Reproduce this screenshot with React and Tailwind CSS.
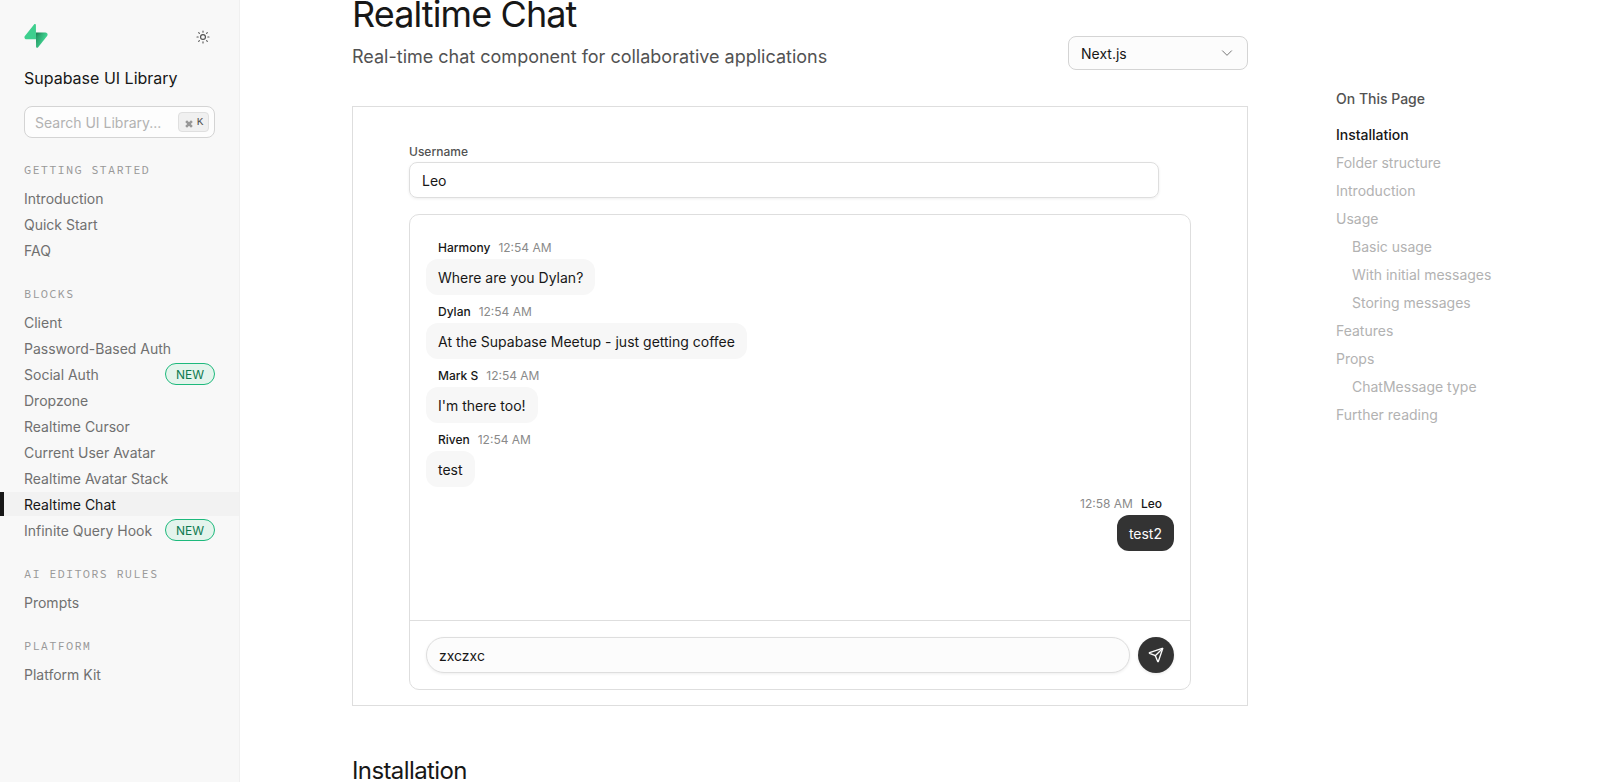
import React from 'react';

const sections = [
  { title: 'GETTING STARTED', items: [['Introduction'], ['Quick Start'], ['FAQ']] },
  {
    title: 'BLOCKS',
    items: [
      ['Client'],
      ['Password-Based Auth'],
      ['Social Auth', 'new'],
      ['Dropzone'],
      ['Realtime Cursor'],
      ['Current User Avatar'],
      ['Realtime Avatar Stack'],
      ['Realtime Chat', 'active'],
      ['Infinite Query Hook', 'new'],
    ],
  },
  { title: 'AI EDITORS RULES', items: [['Prompts']] },
  { title: 'PLATFORM', items: [['Platform Kit']] },
];

const messages = [
  ['Harmony', '12:54 AM', 'Where are you Dylan?'],
  ['Dylan', '12:54 AM', 'At the Supabase Meetup - just getting coffee'],
  ['Mark S', '12:54 AM', "I'm there too!"],
  ['Riven', '12:54 AM', 'test'],
  ['Leo', '12:58 AM', 'test2', true],
];

const toc = [
  ['Folder structure'],
  ['Introduction'],
  ['Usage'],
  ['Basic usage', true],
  ['With initial messages', true],
  ['Storing messages', true],
  ['Features'],
  ['Props'],
  ['ChatMessage type', true],
  ['Further reading'],
];

function Logo() {
  return (
    <svg width="24" height="24" viewBox="0 0 109 113" fill="none" aria-hidden="true">
      <path d="M63.7076 110.284C60.8481 113.885 55.0502 111.912 54.9813 107.314L53.9738 40.0627L99.1935 40.0627C107.384 40.0627 111.952 49.5228 106.859 55.9374L63.7076 110.284Z" fill="url(#logoA)" />
      <path d="M63.7076 110.284C60.8481 113.885 55.0502 111.912 54.9813 107.314L53.9738 40.0627L99.1935 40.0627C107.384 40.0627 111.952 49.5228 106.859 55.9374L63.7076 110.284Z" fill="url(#logoB)" fillOpacity="0.2" />
      <path d="M45.317 2.07103C48.1765 -1.53037 53.9745 0.442937 54.0434 5.041L54.4849 72.2922H9.83113C1.64038 72.2922 -2.92775 62.8321 2.1655 56.4175L45.317 2.07103Z" fill="#3ECF8E" />
      <defs>
        <linearGradient id="logoA" x1="53.9738" y1="54.974" x2="94.1635" y2="71.8295" gradientUnits="userSpaceOnUse">
          <stop stopColor="#249361" />
          <stop offset="1" stopColor="#3ECF8E" />
        </linearGradient>
        <linearGradient id="logoB" x1="36.1558" y1="30.578" x2="54.4844" y2="65.0806" gradientUnits="userSpaceOnUse">
          <stop />
          <stop offset="1" stopOpacity="0" />
        </linearGradient>
      </defs>
    </svg>
  );
}

function SunIcon() {
  return (
    <svg width="14" height="14" viewBox="0.5 0.5 14 14" fill="none" aria-hidden="true">
      <circle cx="7.5" cy="7.5" r="2.45" stroke="#525252" strokeWidth="1.2" />
      <path d="M7.5 1.5v1.2M7.5 12.3v1.2M1.5 7.5h1.2M12.3 7.5h1.2M3.2 3.2l.7.7M11.1 11.1l.7.7M3.2 11.8l.7-.7M11.1 3.9l.7-.7" stroke="#525252" strokeWidth="1.1" strokeLinecap="round" />
    </svg>
  );
}

function Sidebar() {
  return (
    <aside className="flex h-full w-60 shrink-0 flex-col border-r border-[#f0f0f0] bg-[#f8f8f8] pt-6">
      <div className="flex h-6 items-center justify-between px-6">
        <Logo />
        <span className="mt-0.5 mr-[5px] flex">
          <SunIcon />
        </span>
      </div>
      <div className="mt-[18px] px-6 text-base leading-6 text-[#171717]">Supabase UI Library</div>
      <div className="mx-6 mt-4 flex h-8 items-center justify-between rounded-lg border border-[#d4d4d4] bg-[#fdfdfd] pr-[5px] pl-2.5">
        <span className="pt-0.5 text-sm text-[#b2b2b2]">Search UI Library...</span>
        <kbd className="flex h-5 w-[31px] items-center justify-center gap-1 rounded-sm border border-[#dfdfdf] bg-[#f0f0f0] pl-px font-['Liberation_Mono',monospace] text-[11px] leading-none text-[#525252]">
          <svg width="8" height="8" viewBox="0 0 24 24" fill="none" stroke="currentColor" strokeWidth="2" className="mt-[3px]">
            <path d="M15 6v12a3 3 0 1 0 3-3H6a3 3 0 1 0 3 3V6a3 3 0 1 0-3 3h12a3 3 0 1 0-3-3" />
          </svg>
          <span>K</span>
        </kbd>
      </div>
      <nav className="mt-6 flex flex-col gap-6">
        {sections.map((s) => (
          <div key={s.title}>
            <div className="mb-2 px-6 font-['Source_Code_Pro','Liberation_Mono',monospace] text-xs leading-4 tracking-[1.2px] text-[#999]">{s.title}</div>
            <div className="flex flex-col gap-0.5">
              {s.items.map(([label, flag]) => (
                <div
                  key={label}
                  className={
                    flag === 'active'
                      ? 'flex h-6 items-center border-l-4 border-[#171717] bg-[#f2f2f2] pl-5 text-sm text-[#171717]'
                      : 'flex h-6 items-center justify-between px-6 text-sm text-[#707070]'
                  }
                >
                  <span className="pt-0.5">{label}</span>
                  {flag === 'new' && (
                    <span className="flex h-[22px] w-[50px] items-center justify-center rounded-full border border-[#1db97c] bg-[#e4f4ec] pt-0.5 text-xs text-[#0f7a50]">NEW</span>
                  )}
                </div>
              ))}
            </div>
          </div>
        ))}
      </nav>
    </aside>
  );
}

function Message({ name, time, text, own }) {
  return (
    <div className={own ? 'flex flex-col items-end gap-[3px]' : 'flex flex-col items-start gap-[3px]'}>
      <div className={own ? 'flex flex-row-reverse items-center gap-2 px-3 text-xs leading-4' : 'flex items-center gap-2 px-3 text-xs leading-4'}>
        <span className="font-medium text-[#171717]">{name}</span>
        <span className="text-[#8a8a8a]">{time}</span>
      </div>
      <div className={own ? 'rounded-xl bg-[#333] px-3 pt-[9px] pb-[7px] text-sm text-[#fcfcfc]' : 'rounded-xl bg-[#f7f7f7] px-3 pt-[9px] pb-[7px] text-sm text-[#171717]'}>{text}</div>
    </div>
  );
}

function ChatPreview() {
  return (
    <div className="mt-9 h-[600px] border border-[#dedede] px-14 pt-[37px]">
      <div className="text-xs leading-4 font-medium text-[#525252]">Username</div>
      <div className="mt-0.5 mr-8 flex h-9 items-center rounded-lg border border-[#dedede] px-3 pt-0.5 text-sm text-[#171717] shadow-[0_1px_3px_rgba(0,0,0,0.07)]">Leo</div>
      <div className="mt-4 flex h-[476px] flex-col rounded-[10px] border border-[#dedede]">
        <div className="flex flex-1 flex-col gap-[9px] px-4 pt-[25px]">
          {messages.map(([name, time, text, own]) => (
            <Message key={name} name={name} time={time} text={text} own={own} />
          ))}
        </div>
        <div className="flex gap-2 border-t border-[#dedede] p-4">
          <div className="flex h-9 flex-1 items-center rounded-full border border-[#dedede] bg-[#fcfcfc] px-3 pt-0.5 text-sm text-[#171717] shadow-[0_1px_3px_rgba(0,0,0,0.07)]">zxczxc</div>
          <div className="flex size-9 items-center justify-center rounded-full bg-[#333] text-[#fcfcfc] shadow-[0_1px_3px_rgba(0,0,0,0.1)]">
            <svg width="16" height="16" viewBox="0 0 24 24" fill="none" stroke="currentColor" strokeWidth="2" strokeLinecap="round" strokeLinejoin="round">
              <path d="M14.536 21.686a.5.5 0 0 0 .937-.024l6.5-19a.496.496 0 0 0-.635-.635l-19 6.5a.5.5 0 0 0-.024.937l7.93 3.18a2 2 0 0 1 1.112 1.11z" />
              <path d="m21.854 2.147-10.94 10.939" />
            </svg>
          </div>
        </div>
      </div>
    </div>
  );
}

export default function App() {
  return (
    <div className="flex h-[782px] w-[1600px] overflow-hidden bg-white font-['Inter',sans-serif]">
      <Sidebar />
      <main className="ml-28 w-[896px] shrink-0">
        <div className="-mt-1.5 flex items-end justify-between">
          <div>
            <h1 className="text-4xl leading-10 tracking-tight text-[#171717]">Realtime Chat</h1>
            <p className="mt-[9px] -mb-px text-lg leading-7 text-[#525252]">Real-time chat component for collaborative applications</p>
          </div>
          <div className="flex h-[34px] w-[180px] items-center justify-between rounded-lg border border-[#d4d4d4] bg-[#fcfcfc] px-3 text-sm text-[#171717]">
            <span className="pt-0.5">Next.js</span>
            <svg width="16" height="16" viewBox="0 0 24 24" fill="none" stroke="#525252" strokeWidth="1.2" strokeLinecap="round" strokeLinejoin="round">
              <path d="m5.2 8.7 6.8 6.8 6.8-6.8" />
            </svg>
          </div>
        </div>
        <ChatPreview />
        <h2 className="mt-[49px] text-2xl leading-8 tracking-tight text-[#171717]">Installation</h2>
      </main>
      <aside className="ml-[88px] pt-[89px] text-sm">
        <div className="leading-5 font-medium text-[#525252]">On This Page</div>
        <div className="mt-4 flex flex-col gap-2 leading-5 text-[#b2b2b2]">
          <div className="font-medium text-[#171717]">Installation</div>
          {toc.map(([label, nested]) => (
            <div key={label} className={nested ? 'pl-4' : ''}>{label}</div>
          ))}
        </div>
      </aside>
    </div>
  );
}
